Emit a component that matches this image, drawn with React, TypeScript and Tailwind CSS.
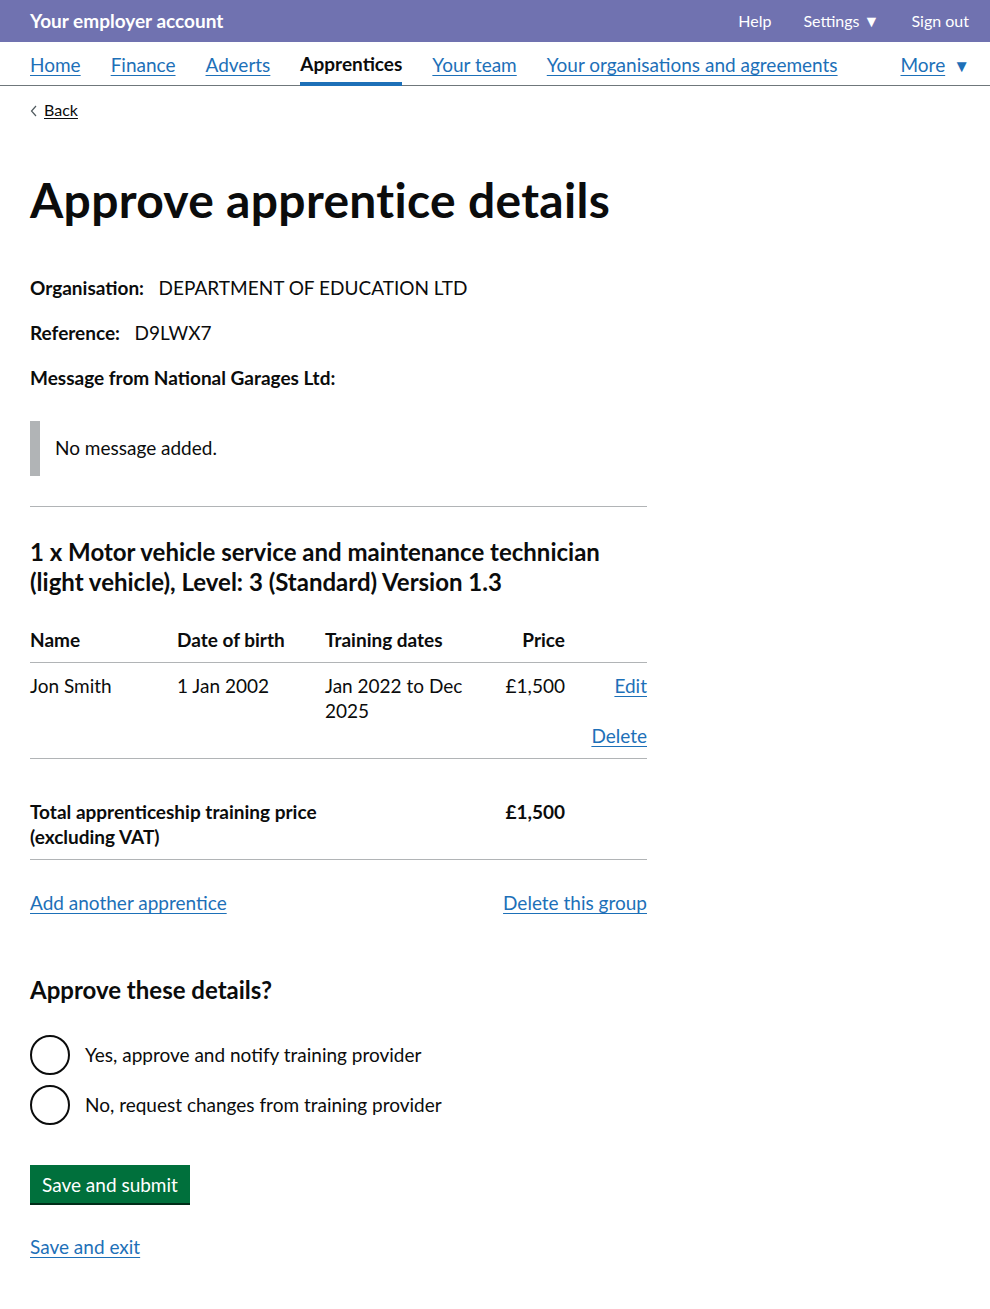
import React from "react";

const font = { fontFamily: "Lato, 'Liberation Sans', Arial, sans-serif" };

const navLinks = ["Home", "Finance", "Adverts", "Apprentices", "Your team", "Your organisations and agreements"];

const Radio = ({ label }: { label: string }) => (
  <label className="flex items-center gap-[15px] h-[50px]">
    <span className="w-[40px] h-[40px] rounded-full border-2 border-[#0b0c0c] bg-white shrink-0" />
    <span className="text-[19px]">{label}</span>
  </label>
);

export default function App() {
  return (
    <div style={font} className="min-h-screen bg-white text-[#0b0c0c]">
      {/* top bar */}
      <header className="bg-[#7072b0] h-[42px] px-[30px] flex items-center justify-between text-white">
        <span className="text-[19px] font-bold">Your employer account</span>
        <nav className="flex items-center gap-[32px] text-[16px] mr-[-9px]">
          <span>Help</span>
          <span>Settings ▼</span>
          <span>Sign out</span>
        </nav>
      </header>

      {/* main nav */}
      <nav className="h-[44px] border-b border-[#6f777b] px-[30px] flex items-stretch justify-between text-[19px]">
        <ul className="flex items-stretch gap-[30px] pt-[4px]">
          {navLinks.map((l) =>
            l === "Apprentices" ? (
              <li key={l} className="flex items-center font-bold border-b-4 border-[#1d70b8] mb-[-1px]">
                {l}
              </li>
            ) : (
              <li key={l} className="flex items-center">
                <a href="#" className="text-[#1d70b8] underline underline-offset-[3px]">{l}</a>
              </li>
            )
          )}
        </ul>
        <div className="flex items-center gap-[8px] text-[#1d70b8] pt-[4px] mr-[-10px]">
          <a href="#" className="underline underline-offset-[3px]">More</a>
          <span className="text-[17px]">▼</span>
        </div>
      </nav>

      <main className="px-[30px]">
        <a href="#" className="flex items-center gap-[6px] mt-[12px] text-[16px] text-[#0b0c0c]">
          <svg width="8" height="12" viewBox="0 0 8 12" className="mt-[1px]">
            <path d="M6 1 L1.5 6 L6 11" fill="none" stroke="#505a5f" strokeWidth="1.2" />
          </svg>
          <span className="underline underline-offset-[2px]">Back</span>
        </a>

        <div className="w-[617px]">
          <h1 className="text-[48px] font-bold leading-[50px] tracking-[0.3px] mt-[53px] mb-[50px]">Approve apprentice details</h1>

          <p className="text-[19px] leading-[25px] mb-[20px]">
            <span className="font-bold">Organisation:</span>&nbsp;&nbsp; DEPARTMENT OF EDUCATION LTD
          </p>
          <p className="text-[19px] leading-[25px] mb-[20px]">
            <span className="font-bold">Reference:</span>&nbsp;&nbsp; D9LWX7
          </p>
          <p className="text-[19px] leading-[25px] font-bold mb-[31px]">Message from National Garages Ltd:</p>

          <div className="border-l-[10px] border-[#b1b4b6] pl-[15px] h-[55px] flex items-center text-[19px]">
            No message added.
          </div>

          <hr className="border-t border-[#b1b4b6] mt-[30px] mb-[30px]" />

          <h2 className="text-[24px] font-bold leading-[30px] mb-[30px]">
            1 x Motor vehicle service and maintenance technician (light vehicle), Level: 3 (Standard) Version 1.3
          </h2>

          <table className="w-full text-[19px] leading-[25px] border-collapse">
            <thead>
              <tr className="border-b border-[#b1b4b6] font-bold text-left">
                <th className="w-[147px] pb-[10px] text-left">Name</th>
                <th className="w-[148px] pb-[10px] text-left">Date of birth</th>
                <th className="w-[170px] pb-[10px] text-left">Training dates</th>
                <th className="w-[70px] pb-[10px] text-right">Price</th>
                <th className="pb-[10px]"></th>
              </tr>
            </thead>
            <tbody>
              <tr className="border-b border-[#b1b4b6] align-top">
                <td className="pt-[10px] pb-[10px]">Jon Smith</td>
                <td className="pt-[10px]">1 Jan 2002</td>
                <td className="pt-[10px] pr-[20px]">Jan 2022 to Dec 2025</td>
                <td className="pt-[10px] text-right">£1,500</td>
                <td className="pt-[10px] pb-[10px] text-right">
                  <a href="#" className="text-[#1d70b8] underline underline-offset-[3px]">Edit</a>
                  <div className="mt-[25px]">
                    <a href="#" className="text-[#1d70b8] underline underline-offset-[3px]">Delete</a>
                  </div>
                </td>
              </tr>
              <tr className="border-b border-[#b1b4b6] align-top font-bold">
                <td colSpan={3} className="pt-[40px] pb-[10px]">
                  Total apprenticeship training price
                  <br />
                  (excluding VAT)
                </td>
                <td className="pt-[40px] text-right">£1,500</td>
                <td></td>
              </tr>
            </tbody>
          </table>

          <div className="flex justify-between mt-[30px] text-[19px] leading-[25px]">
            <a href="#" className="text-[#1d70b8] underline underline-offset-[3px]">Add another apprentice</a>
            <a href="#" className="text-[#1d70b8] underline underline-offset-[3px]">Delete this group</a>
          </div>

          <h2 className="text-[24px] font-bold leading-[30px] mt-[60px] mb-[25px]">Approve these details?</h2>

          <div className="flex flex-col">
            <Radio label="Yes, approve and notify training provider" />
            <Radio label="No, request changes from training provider" />
          </div>

          <button className="mt-[35px] bg-[#00703c] text-white text-[19px] leading-[19px] px-[12px] pt-[9px] pb-[8px] h-[38px] shadow-[0_2px_0_#002d18]">
            Save and submit
          </button>

          <div className="mt-[30px] text-[19px] pb-[40px]">
            <a href="#" className="text-[#1d70b8] underline underline-offset-[3px]">Save and exit</a>
          </div>
        </div>
      </main>
    </div>
  );
}
